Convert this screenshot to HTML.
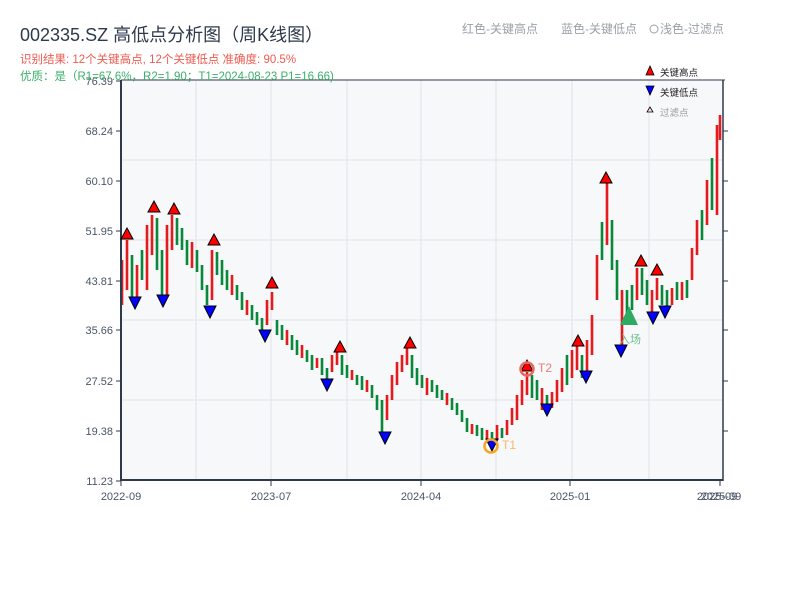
<!DOCTYPE html>
<html><head><meta charset="utf-8"><style>
body{margin:0;background:#fff;width:800px;height:600px;overflow:hidden;font-family:"Liberation Sans","Noto Sans CJK SC",sans-serif}
</style></head><body>
<svg width="800" height="600" xmlns="http://www.w3.org/2000/svg" font-family="Liberation Sans, Noto Sans CJK SC, sans-serif">
<rect x="121" y="80" width="602" height="400" fill="#f7f8fa"/>
<g stroke="#dfe2e8" stroke-width="1">
<line x1="196" y1="80" x2="196" y2="480"/><line x1="271" y1="80" x2="271" y2="480"/><line x1="347" y1="80" x2="347" y2="480"/><line x1="421" y1="80" x2="421" y2="480"/><line x1="496" y1="80" x2="496" y2="480"/><line x1="572" y1="80" x2="572" y2="480"/><line x1="649" y1="80" x2="649" y2="480"/>
<line x1="121" y1="160" x2="723" y2="160"/><line x1="121" y1="240" x2="723" y2="240"/><line x1="121" y1="320" x2="723" y2="320"/><line x1="121" y1="400" x2="723" y2="400"/>
</g>
<path stroke="#e41a1c" stroke-width="2.6" fill="none" d="M122,260V305M127,240V290M137,265V298M147,225V290M152,215V255M167,225V295M172,215V250M192,242V268M212,250V300M232,275V295M247,300V315M267,300V325M272,292V310M287,330V345M302,345V358M317,358V368M332,355V372M337,350V365M352,370V380M367,380V392M387,395V420M392,375V400M397,362V385M402,355V372M407,345V365M427,378V395M447,393V405M472,424V434M487,430V440M497,425V440M507,420V435M512,408V425M517,395V420M522,380V405M527,372V395M542,388V410M552,392V408M557,380V402M562,368V392M572,350V378M577,346V370M587,340V372M592,315V355M597,255V300M607,182V245M622,290V345M637,268V300M652,290V315M657,278V300M672,288V305M682,282V300M692,248V280M697,220V255M707,180V225M717,125V215M720,115V140"/>
<path stroke="#08893a" stroke-width="2.6" fill="none" d="M132,255V300M142,250V280M157,218V270M162,250V298M177,218V245M182,228V250M187,240V265M197,250V272M202,265V290M207,285V305M217,252V275M222,260V285M227,270V290M237,285V300M242,292V310M252,305V320M257,312V325M262,318V332M277,320V335M282,325V340M292,335V350M297,340V355M307,350V362M312,355V370M322,358V375M327,368V382M342,355V375M347,365V378M357,375V385M362,376V390M372,385V398M377,395V410M382,400V432M412,355V378M417,368V385M422,375V388M432,380V392M437,385V398M442,390V400M452,398V410M457,403V415M462,410V422M467,418V432M477,425V436M482,428V440M492,432V442M502,428V438M532,375V398M537,380V400M547,395V410M567,355V385M582,355V378M602,222V260M612,220V270M617,260V300M627,290V320M632,285V310M642,268V295M647,280V305M662,285V305M667,290V308M677,282V300M687,280V298M702,210V240M712,158V210"/>
<g stroke="#2d3a4b" stroke-width="2" fill="none">
<line x1="121" y1="80" x2="121" y2="481"/><line x1="120" y1="480" x2="723" y2="480"/>
</g>
<line x1="121" y1="80" x2="725" y2="80" stroke="#2d3a4b" stroke-width="1"/>
<line x1="723" y1="80" x2="723" y2="481" stroke="#2d3a4b" stroke-width="1.5"/>
<g stroke="#2d3a4b" stroke-width="1">
<line x1="116" y1="81" x2="121" y2="81"/><line x1="116" y1="131" x2="121" y2="131"/><line x1="116" y1="181" x2="121" y2="181"/><line x1="116" y1="231" x2="121" y2="231"/><line x1="116" y1="281" x2="121" y2="281"/><line x1="116" y1="330" x2="121" y2="330"/><line x1="116" y1="381" x2="121" y2="381"/><line x1="116" y1="431" x2="121" y2="431"/><line x1="116" y1="481" x2="121" y2="481"/>
<line x1="723" y1="131" x2="728" y2="131"/><line x1="723" y1="181" x2="728" y2="181"/><line x1="723" y1="231" x2="728" y2="231"/><line x1="723" y1="281" x2="728" y2="281"/><line x1="723" y1="330" x2="728" y2="330"/><line x1="723" y1="381" x2="728" y2="381"/><line x1="723" y1="431" x2="728" y2="431"/>
<line x1="121" y1="480" x2="121" y2="486"/><line x1="271" y1="480" x2="271" y2="486"/><line x1="421" y1="480" x2="421" y2="486"/><line x1="570" y1="480" x2="570" y2="486"/><line x1="720" y1="480" x2="720" y2="486"/>
</g>
<g font-size="11" fill="#4a5565" text-anchor="end">
<text x="113" y="85">76.39</text><text x="113" y="135">68.24</text><text x="113" y="185">60.10</text><text x="113" y="235">51.95</text><text x="113" y="285">43.81</text><text x="113" y="334">35.66</text><text x="113" y="385">27.52</text><text x="113" y="435">19.38</text><text x="113" y="485">11.23</text>
</g>
<g font-size="11" fill="#4a5565" text-anchor="middle">
<text x="121" y="500">2022-09</text><text x="271" y="500">2023-07</text><text x="421" y="500">2024-04</text><text x="570" y="500">2025-01</text><text x="717" y="500">2025-09</text><text x="721" y="500">2025-09</text>
</g>
<g fill="#f00" stroke="#000" stroke-width="1">
<polygon points="127,228 121,239 133,239"/><polygon points="154,201 148,212 160,212"/><polygon points="174,203 168,214 180,214"/><polygon points="214,234 208,245 220,245"/><polygon points="272,277 266,288 278,288"/><polygon points="340,341 334,352 346,352"/><polygon points="410,337 404,348 416,348"/><polygon points="527,360 521,371 533,371"/><polygon points="578,335 572,346 584,346"/><polygon points="606,172 600,183 612,183"/><polygon points="641,255 635,266 647,266"/><polygon points="657,264 651,275 663,275"/>
</g>
<g fill="#00f" stroke="#000" stroke-width="1">
<polygon points="129,297 141,297 135,309"/><polygon points="157,295 169,295 163,307"/><polygon points="204,306 216,306 210,318"/><polygon points="259,330 271,330 265,342"/><polygon points="321,379 333,379 327,391"/><polygon points="379,432 391,432 385,444"/><polygon points="486,439 498,439 492,451"/><polygon points="541,404 553,404 547,416"/><polygon points="580,371 592,371 586,383"/><polygon points="615,345 627,345 621,357"/><polygon points="647,312 659,312 653,324"/><polygon points="659,306 671,306 665,318"/>
</g>
<circle cx="491" cy="446" r="6.5" fill="none" stroke="#f5a623" stroke-width="2.5"/>
<text x="502" y="449" font-size="12" fill="#f5b860">T1</text>
<circle cx="527" cy="369" r="6.5" fill="none" stroke="#e86a5e" stroke-width="2.5"/>
<text x="538" y="372" font-size="12" fill="#ee7d72">T2</text>
<polygon points="629,306 620,325 638,325" fill="#2eaa62"/>
<text x="619" y="343" font-size="11" fill="#6cc08e">入场</text>
<text x="20" y="41" font-size="18" fill="#2d3a4b">002335.SZ 高低点分析图（周K线图）</text>
<text x="20" y="63" font-size="11.5" fill="#ee5a4f">识别结果: 12个关键高点, 12个关键低点   准确度: 90.5%</text>
<text x="20" y="80" font-size="11.5" fill="#3cb06a">优质：是（R1=67.6%，R2=1.90；T1=2024-08-23 P1=16.66)</text>
<text x="462" y="33" font-size="12" fill="#9aa0a8">红色-关键高点</text>
<text x="561" y="33" font-size="12" fill="#9aa0a8">蓝色-关键低点</text>
<circle cx="654" cy="29" r="4" fill="none" stroke="#9aa0a8"/>
<text x="660" y="33" font-size="12" fill="#9aa0a8">浅色-过滤点</text>
<polygon points="650,66 646,75 654,75" fill="#f00" stroke="#000" stroke-width="0.8"/>
<text x="660" y="76" font-size="9.5" fill="#222">关键高点</text>
<polygon points="646,86 654,86 650,95" fill="#00f" stroke="#000" stroke-width="0.8"/>
<text x="660" y="96" font-size="9.5" fill="#222">关键低点</text>
<polygon points="650,107 647,112 653,112" fill="#fde" stroke="#000" stroke-width="0.8"/>
<text x="660" y="116" font-size="9.5" fill="#999">过滤点</text>
</svg>
</body></html>
